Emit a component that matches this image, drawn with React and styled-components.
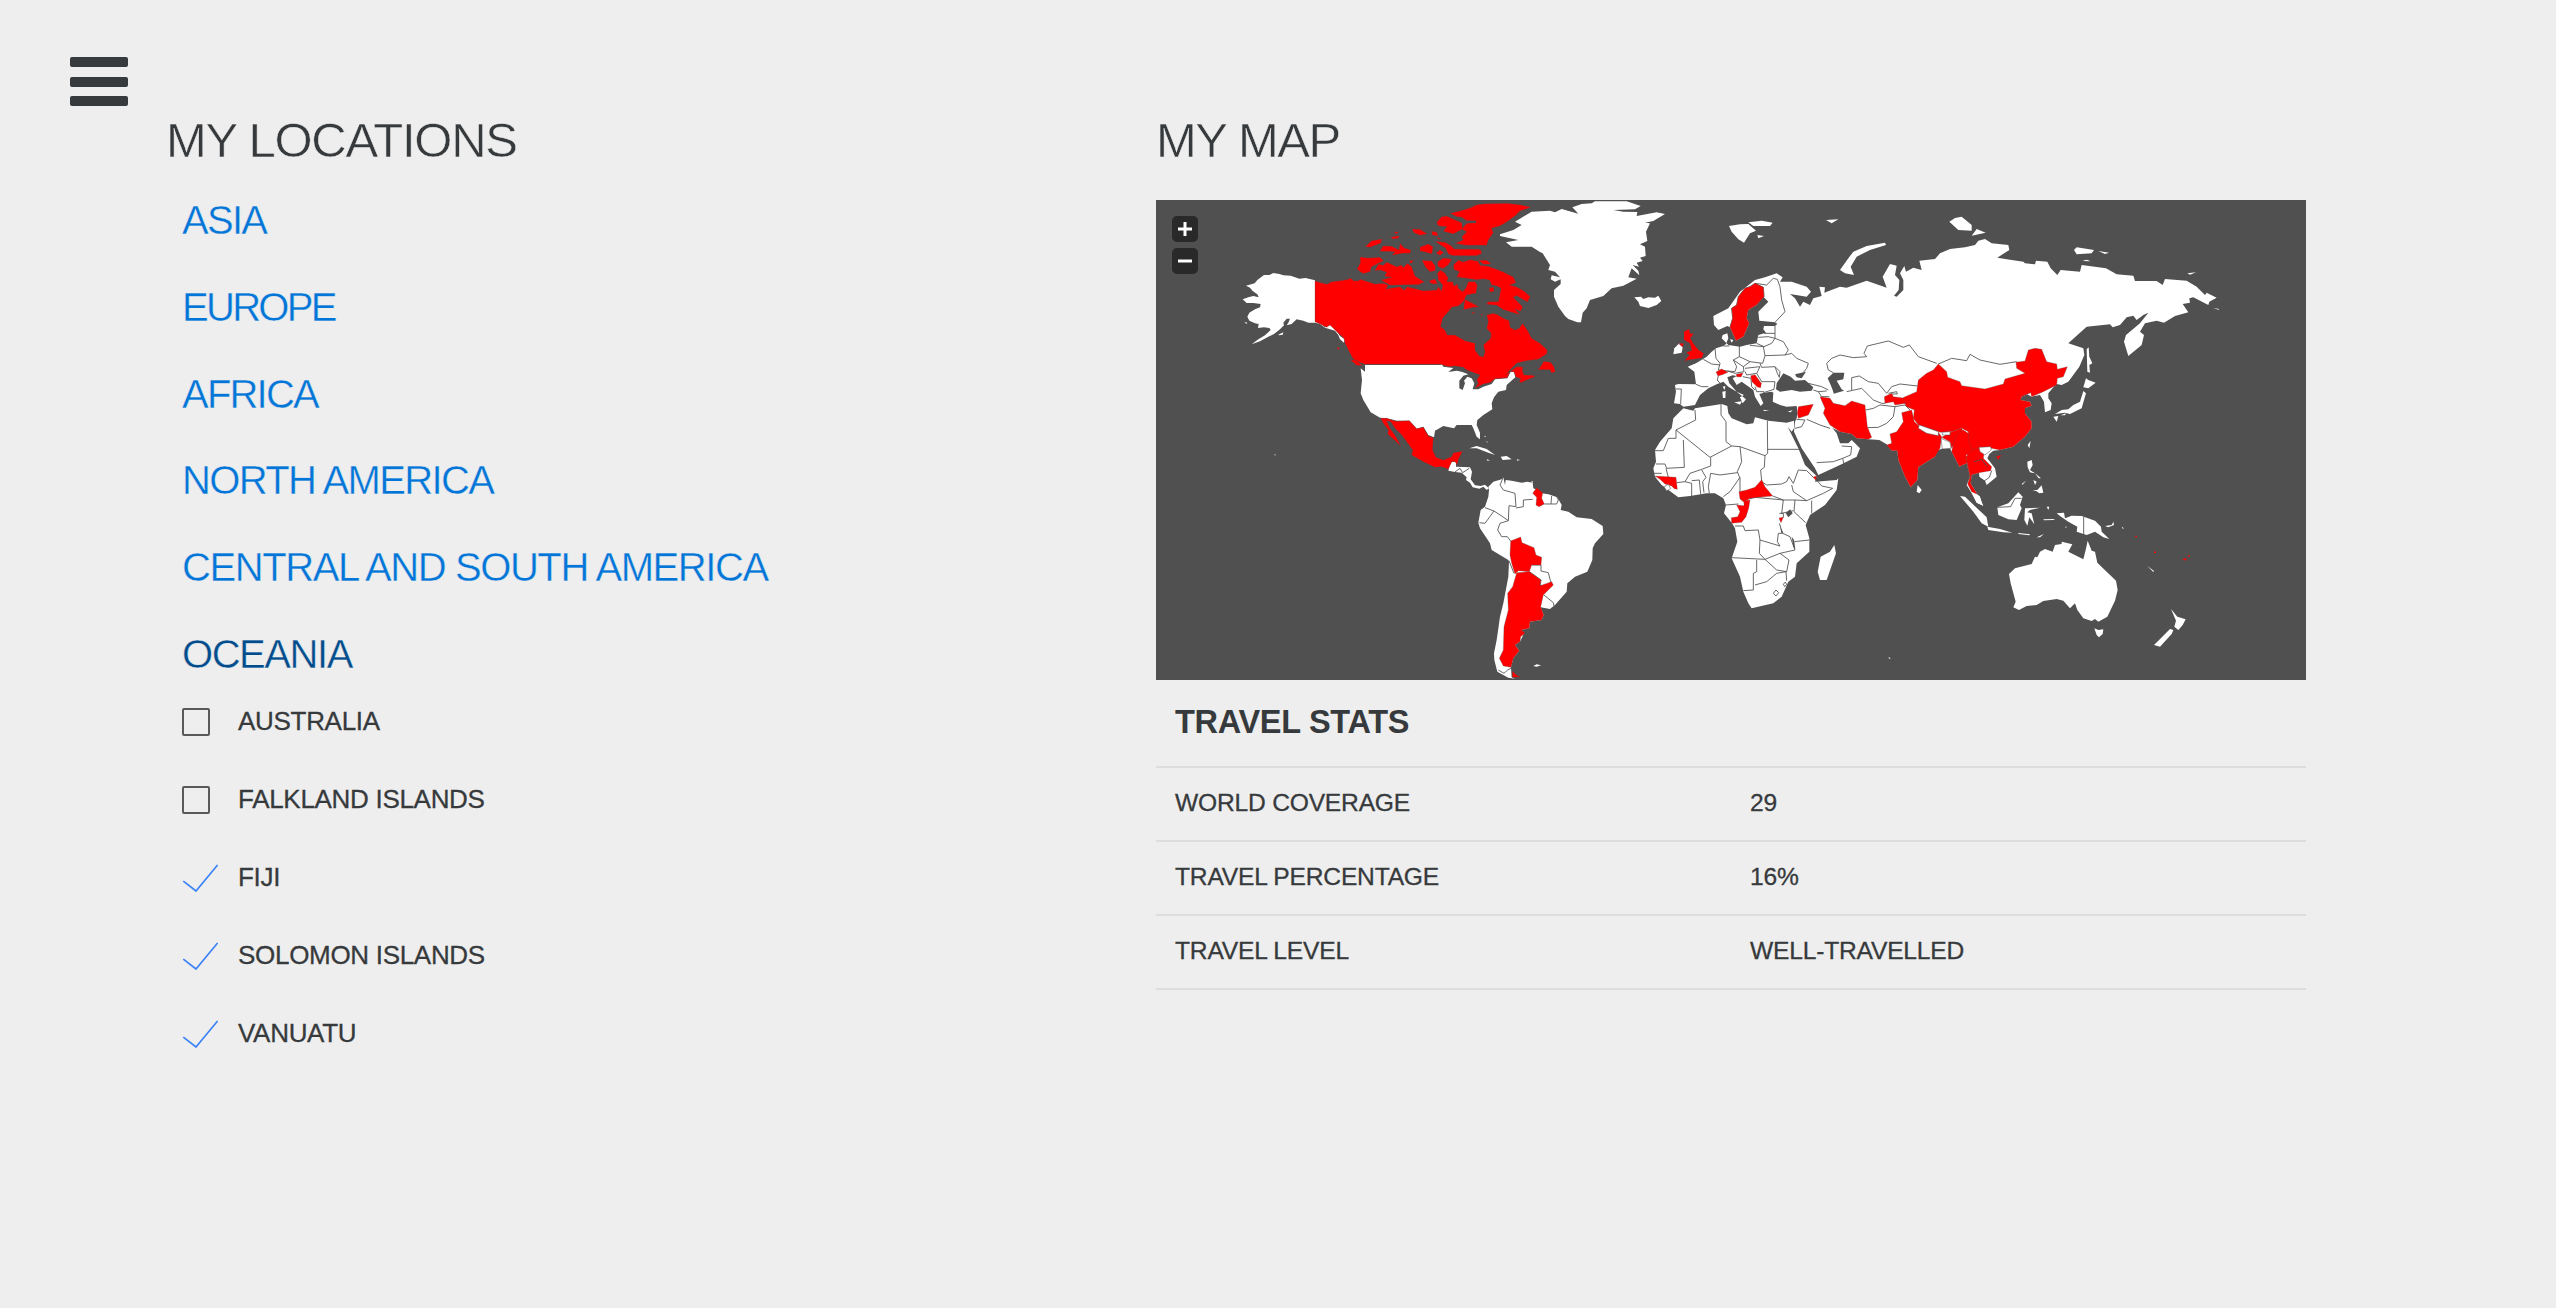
import React, { useState } from "react";
import styled, { createGlobalStyle } from "styled-components";

const GlobalStyle = createGlobalStyle`
  * { box-sizing: border-box; }
  body {
    margin: 0;
    background: #eeeeee;
    color: #373a3c;
    font-family: "Liberation Sans", Arial, sans-serif;
    font-size: 26px;
  }
`;

const Page = styled.div`
  display: grid;
  grid-template-columns: 1156px 1150px;
  height: 1308px;
  overflow: hidden;
  padding-top: 57px;
`;

const LocationsColumn = styled.section`
  padding-left: 70px;
`;

const MapColumn = styled.section`
  padding-top: 49px;
`;

const MenuButton = styled.button`
  display: flex;
  flex-direction: column;
  justify-content: space-between;
  width: 58px;
  height: 49px;
  padding: 0;
  border: 0;
  background: none;
`;

const MenuBar = styled.span`
  height: 10px;
  border-radius: 2px;
  background: #373a3c;
`;

const Title = styled.h1`
  margin: 0;
  height: ${(p) => p.$height}px;
  padding-left: ${(p) => p.$inset}px;
  font-size: 49px;
  font-weight: 300;
  line-height: 68px;
  letter-spacing: ${(p) => p.$tracking}px;
  white-space: nowrap;
  -webkit-text-stroke: 0.5px #eeeeee;
`;

const RegionList = styled.ul`
  margin: 0;
  padding: 0 0 0 112px;
  list-style: none;
`;

const RegionItem = styled.li`
  height: ${(p) => (p.$open ? 58.8 : 86.8)}px;
`;

const RegionLink = styled.a`
  display: block;
  font-size: 40px;
  line-height: 60px;
  letter-spacing: ${(p) => p.$tracking}px;
  white-space: nowrap;
  color: ${(p) => (p.$open ? "#014c8c" : "#0275d8")};
  -webkit-text-stroke: 0.4px #eeeeee;
`;

const CountryList = styled.ul`
  margin: 0;
  padding: 0 0 0 112px;
  list-style: none;
`;

const CountryRow = styled.li`
  display: flex;
  align-items: center;
  height: 78px;
  letter-spacing: -0.3px;
  -webkit-text-stroke: 0.3px #373a3c;
`;

const Mark = styled.span`
  display: flex;
  flex: none;
  width: 56px;
`;

const EmptyBox = styled.span`
  width: 28px;
  height: 28px;
  border: 2px solid #5a5a5a;
  border-radius: 2px;
`;

const MapFrame = styled.div`
  position: relative;
  height: 480px;
  background: #505050;
  overflow: hidden;
`;

const MapDrawing = styled.svg`
  display: block;
  width: 100%;
  height: 100%;
`;

const ZoomControls = styled.div`
  position: absolute;
  left: 16px;
  top: 16px;
  display: flex;
  flex-direction: column;
  gap: 6px;
`;

const ZoomButton = styled.button`
  display: flex;
  align-items: center;
  justify-content: center;
  width: 26px;
  height: 26px;
  padding: 0;
  border: 0;
  border-radius: 5px;
  background: #292929;
`;

const Stats = styled.table`
  width: 100%;
  border-collapse: separate;
  border-spacing: 0;
  table-layout: fixed;
`;

const StatsHead = styled.th`
  height: 88px;
  padding: 0 19px 1px;
  border-bottom: 2px solid #dddddd;
  text-align: left;
  font-size: 32.5px;
  letter-spacing: -0.3px;
`;

const StatCell = styled.td`
  height: 74px;
  padding: 0 19px 2px;
  border-bottom: 2px solid #dddddd;
  font-size: 24.6px;
  letter-spacing: -0.2px;
  -webkit-text-stroke: 0.3px #373a3c;
`;

/* Every sheet of the atlas is drawn in thirds of a pixel from its own origin. */
const SHEETS = [
  {
    at: [1140, 100],
    land: [
      "525,541 497,534 478,536 452,527 430,526 418,522 400,519 388,525 372,525 352,540 344,550 318,557 330,563 338,573 352,583 356,592 340,588 325,592 308,598 320,609 340,609 362,612 360,622 345,628 328,638 322,650 328,662 345,670 356,672 354,684 372,682 388,684 392,690 375,706 355,718 335,733 360,724 385,710 402,702 420,688 432,676 430,668 440,656 450,656 445,668 440,676 455,672 470,658 490,662 505,668 525,668 540,672 555,683 570,688 585,692 595,705 600,718 612,728 614,718 600,708 590,692 575,676 565,676 555,682 540,668 525,666",
      "415,704 430,697 428,704 417,706",
      "312,668 320,667 322,671",
      "403,1062 407,1064 405,1067",
    ],
  },
  {
    at: [1320, 190],
    land: [
      "135,525 362,525 365,522 370,530 400,534 385,546 410,542 425,545 445,553 430,557 418,572 418,595 428,600 435,580 432,572 442,560 455,565 463,580 458,598 475,598 490,590 515,582 525,568 562,565 572,545 582,545 586,562 560,585 558,600 535,605 522,622 515,640 517,658 490,675 472,690 470,705 480,728 480,748 470,740 460,715 455,705 435,705 410,705 402,715 370,708 345,722 342,742 325,735 310,710 290,716 268,692 230,692 200,685 180,683 152,667 130,630 122,610 126,570 122,535 135,545",
      "493,737 498,739 495,742",
      "500,752 504,758 500,756",
    ],
    visited: [
      "-15,273 20,283 35,275 60,272 85,268 92,264 100,272 115,272 122,268 130,271 165,282 190,280 205,286 198,297 240,290 252,301 262,290 310,302 350,300 355,290 365,303 368,285 355,270 352,250 362,240 375,250 385,265 380,275 398,275 402,288 412,282 415,295 428,305 437,295 445,275 465,275 472,285 468,310 440,315 430,335 415,348 395,352 385,365 368,385 362,410 375,420 382,435 405,435 435,452 465,460 465,480 478,498 490,500 495,485 490,465 512,445 513,430 500,415 505,395 500,375 520,370 535,375 550,385 568,392 570,412 585,420 598,415 608,400 625,425 635,445 660,460 682,480 680,492 655,508 620,512 590,520 570,540 560,552 590,530 608,530 608,545 612,555 640,556 645,560 620,570 602,578 598,575 602,565 588,562 582,545 570,545 562,563 525,566 510,578 490,582 465,595 475,580 470,570 480,555 440,540 430,532 405,528 385,530 362,523 135,523 125,520 100,508 90,490 75,460 72,445 55,430 30,405 20,412 0,402 -15,395",
      "390,70 430,60 455,52 470,44 495,41 560,40 600,44 633,52 600,63 590,74 560,96 540,108 515,115 520,128 505,150 500,166 440,166 405,160 430,150 425,140 440,125 425,118 440,100 468,98 468,92 440,92 425,82 410,80",
      "350,97 365,80 380,78 400,87 425,98 428,117 400,132 370,124 380,110 355,108",
      "276,117 300,118 322,132 300,136 282,128",
      "334,124 350,126 354,138 338,136",
      "220,126 236,125 230,132",
      "212,141 238,137 235,145 218,147",
      "136,170 155,152 186,147 182,160 150,172",
      "179,184 190,167 215,169 237,180 240,160 252,173 273,180 270,190 250,190 215,196 225,185",
      "300,171 325,162 339,170 336,192 318,187 300,183",
      "348,190 360,179 371,188 360,196",
      "345,154 375,157 395,168 402,177 480,178 486,190 470,197 400,197 385,192 376,174 365,167",
      "350,143 368,145 355,148",
      "120,201 145,204 180,202 191,212 155,230 150,245 130,251 111,238 121,218",
      "164,242 175,222 190,226 200,216 230,230 245,225 250,233 262,220 275,230 285,258 313,276 295,284 270,284 210,286 183,270 215,262 193,259 200,247 180,240",
      "306,211 335,213 346,228 346,242 330,245 316,231",
      "353,215 370,204 395,207 385,225 368,236 353,229",
      "327,272 345,267 353,282 335,281",
      "268,212 282,211 272,221",
      "401,224 415,210 430,216 450,209 475,214 480,226 505,229 530,238 550,246 580,261 588,278 570,285 590,291 612,303 631,320 622,336 590,317 580,322 608,350 602,364 585,357 600,374 550,359 530,346 499,343 505,335 535,335 540,310 543,295 530,288 515,285 508,270 490,267 470,269 410,261 418,245 401,238",
      "476,211 500,211 514,222 490,223",
      "507,294 521,291 522,304 510,307",
      "434,328 455,338 477,351 460,352 431,359",
      "455,367 465,366 460,371",
      "482,373 490,373 486,377",
      "680,498 672,514 692,517 702,530 706,545 695,549 690,539 654,539 665,525",
      "91,509 110,511 127,527 110,526",
      "51,471 59,474 55,481",
      "182,685 200,685 228,694 268,692 290,716 310,712 325,738 340,743 338,780 348,802 370,810 395,800 400,788 428,784 415,808 412,825 405,815 395,815 385,838 365,830 345,832 310,815 275,795 278,780 245,735 225,715 212,695 200,692 210,715 228,740 243,769 220,747 203,732 205,720 190,700",
    ],
  },
  {
    at: [1540, 190],
    land: [
      "-120,133 -80,120 -55,105 -75,95 -25,65 30,62 45,67 65,57 115,71 97,52 125,42 155,40 165,34 260,34 302,48 285,58 220,60 250,65 292,66 290,78 350,67 375,72 340,93 315,98 330,100 318,125 322,153 300,163 315,170 317,198 300,203 308,213 290,218 297,230 278,225 295,242 298,256 275,235 265,262 290,266 250,287 215,295 190,318 150,330 140,355 128,368 123,397 112,397 85,387 75,378 55,350 42,320 42,300 62,282 62,268 45,275 32,268 35,256 60,262 45,245 25,240 30,225 8,190 0,186 -25,170 -85,170 -102,157 -65,150 -120,138",
      "283,322 303,320 310,327 325,322 345,323 355,317 364,333 350,345 325,354 300,348 295,335",
    ],
  },
  {
    at: [1440, 440],
    land: [
      "25,92 28,78 35,65 48,65 48,80 90,82 96,95 92,118 105,136 122,138 135,134 147,145 140,150 130,140 118,146 98,142 90,128 78,120 80,112 65,98 45,96",
      "147,150 145,140 160,125 185,118 190,112 195,135 197,120 215,122 245,128 262,125 278,128 280,145 292,150 305,160 325,163 352,172 365,195 362,210 385,215 410,232 455,237 488,258 490,282 465,310 458,325 457,360 442,395 405,410 382,430 380,455 345,495 330,507 302,502 311,525 305,540 270,545 268,565 245,570 252,580 240,605 225,615 238,632 220,655 213,682 215,712 225,716 205,713 172,695 163,660 162,640 170,600 173,580 180,530 190,490 205,410 207,365 205,360 155,330 150,310 120,265 115,248 122,210 135,200 145,170",
      "88,25 110,18 140,27 165,45 145,38 110,25",
      "182,50 200,48 215,58 188,60",
      "140,58 150,61 142,62",
      "230,58 240,60 232,62",
      "280,678 290,673 303,676 290,680",
      "274,124 279,124 277,130",
    ],
    visited: [
      "278,160 290,143 308,158 305,175 313,192 297,200 288,195 290,172",
      "212,303 242,291 246,308 282,323 288,345 305,352 303,375 275,375 268,395 235,392 225,402 215,370 210,345",
      "230,398 268,395 303,420 300,437 335,425 340,435 310,465 302,500 311,525 305,540 270,545 268,565 245,570 255,580 242,590 240,605 225,615 238,632 220,655 213,682 190,678 178,655 190,630 192,560 205,510 203,460 218,440",
      "217,693 230,706 243,711 217,712",
    ],
    borders: [
      "190,112 180,135 190,150 225,160 228,200 207,197 205,242",
      "228,204 250,200 250,180 278,178",
      "205,242 180,250 173,270 185,290 202,290 212,303",
      "118,248 135,250 162,213 135,203",
      "162,213 185,228 205,242",
      "335,168 333,192 350,192 355,180 350,170",
      "313,192 333,192",
      "303,375 303,393 325,398 332,425 325,437 300,437",
      "275,375 303,375",
      "268,395 303,420 300,437",
      "312,465 340,488 342,498",
      "207,362 212,375 222,400",
      "175,690 192,700 203,690 213,685",
      "45,96 60,85 68,98 88,85",
    ],
  },
  {
    at: [1640, 190],
    land: [
      "220,378 265,355 300,305 345,270 375,262 410,250 428,262 420,275 455,275 500,290 513,305 500,320 450,312 465,325 480,350 490,335 510,345 520,325 545,318 538,290 555,292 553,308 600,290 620,293 680,272 740,293 728,260 750,222 770,227 765,255 778,270 776,300 762,317 770,320 790,300 790,270 780,250 793,228 798,245 820,233 845,240 838,212 885,207 900,190 930,177 975,172 1005,165 1015,152 1035,147 1055,160 1105,165 1108,180 1072,203 1115,210 1150,215 1155,220 1185,223 1188,212 1222,215 1232,235 1252,255 1262,240 1320,245 1325,225 1398,235 1430,253 1480,257 1485,273 1550,273 1568,285 1575,267 1640,272 1670,290 1695,315 1700,308 1730,323 1708,335 1705,345 1660,322 1648,325 1650,338 1628,342 1645,367 1605,378 1572,398 1550,392 1515,400 1500,425 1512,435 1505,465 1465,498 1452,455 1458,435 1500,400 1525,368 1510,375 1490,390 1480,377 1460,382 1440,405 1418,412 1410,403 1340,410 1285,460 1330,475 1333,495 1318,530 1285,575 1265,585 1250,582 1240,592 1225,610 1225,625 1235,640 1232,660 1215,667 1212,635 1200,615 1175,620 1140,600 1000,640 1000,745 700,690 700,500 405,397 358,392 355,365 385,335 370,320 350,345 325,360 320,385 328,400 310,440 288,452 270,412 262,408 235,420 222,405",
      "405,397 412,402 405,408 372,408 370,418 378,428 355,435 350,460 320,465 300,470 265,465 245,445 248,435 262,430 265,445 258,462 250,468 228,475 215,485 200,500 168,520 143,530 163,545 168,583 115,582 105,585 108,605 102,640 120,642 130,650 165,645 180,615 205,595 230,583 250,575 265,590 290,605 318,628 308,640 300,622 312,615 290,605 268,580 262,562 278,556 290,558 278,565 290,585 305,575 340,600 345,620 362,648 370,640 358,612 372,608 395,605 400,608 398,635 420,645 440,650 470,648 475,690 700,690 750,400",
      "103,475 118,460 128,472 125,488 100,493",
      "267,108 300,103 325,102 348,122 330,130 312,158 295,148 275,125",
      "325,97 365,92 398,98 390,108 340,108",
      "352,135 372,138 355,145",
      "558,90 595,88 575,100",
      "600,240 625,205 640,185 680,168 735,158 738,165 690,180 650,200 632,230 642,255 615,250",
      "928,95 945,84 965,80 995,105 995,122 955,120",
      "1010,117 1037,128 995,137",
      "1302,180 1310,172 1362,180 1355,190 1310,193",
      "1375,183 1407,188 1395,192",
      "1327,213 1340,209 1352,214",
      "1642,250 1668,247 1650,254",
      "1720,354 1738,357 1735,359",
      "1340,478 1346,472 1348,500 1357,520 1348,525 1350,548 1342,545",
      "1338,565 1345,570 1367,578 1345,595 1330,592",
      "1330,603 1338,610 1325,655 1290,672 1275,668 1245,672 1265,660 1285,658 1300,645 1320,635",
      "1240,680 1255,678 1250,695",
      "1262,676 1278,670 1275,676",
      "248,590 256,588 254,600",
      "247,605 257,603 256,624 249,624",
      "283,637 306,634 300,644",
      "370,659 388,662 372,663",
      "443,665 458,660 452,667",
      "270,448 280,450 275,458",
    ],
    water: [
      "563,565 580,548 613,548 610,568 590,572 605,598 622,608 618,645 590,640 578,600 572,585",
      "408,598 410,580 430,550 452,560 465,572 495,570 520,592 515,602 480,605 455,600 420,605",
      "465,553 498,545 485,565 470,562",
      "368,612 395,606 398,640 390,655 375,640",
    ],
    visited: [
      "345,280 370,292 372,320 350,345 325,360 320,385 328,400 310,440 288,452 270,412 278,385 275,355 290,345 295,320 315,295 330,290",
      "132,424 148,417 150,430 161,431 151,445 161,462 176,480 191,490 186,504 150,509 133,513 148,495 139,487 155,482 150,460 132,450",
      "116,461 131,459 128,471",
      "228,546 245,537 264,547 250,553 234,558",
      "289,553 309,549 303,561 290,560",
      "332,557 345,554 364,580 362,593 352,591 336,575",
    ],
    borders: [
      "345,280 380,285 400,265 412,268 420,290 425,330 435,365 405,397",
      "270,412 278,385 275,355 290,345 295,320 315,295 330,290 345,280 370,292 372,320",
      "405,408 405,445 385,440 355,442",
      "372,430 405,430",
      "350,460 372,470 395,460 405,445 430,455 445,480 435,495 375,497 370,470 330,466",
      "298,468 298,500 330,515 368,520 375,497",
      "250,468 268,468",
      "225,475 228,505 240,520 235,540 262,543 285,545 290,530 280,510 298,500",
      "280,510 310,530 330,515",
      "360,520 365,532 405,530 420,545 418,562",
      "405,530 412,550 418,562",
      "435,495 455,490 470,505 505,520 500,535 490,547",
      "315,535 360,530 350,550 320,555 315,545",
      "350,550 365,575 405,575 402,598 370,608",
      "345,590 350,605 372,605",
      "308,560 333,565 335,590 345,600",
      "262,543 285,550 312,545 310,530",
      "168,583 185,590 205,590",
      "235,557 232,570 240,580",
      "190,508 215,522 240,525",
      "108,597 124,597 122,642",
      "580,548 565,540 560,520 575,505 600,495 640,503 680,500 672,490 682,468 745,453 790,472 808,465 835,500 890,520",
      "505,580 545,590 565,600",
      "520,600 535,605 545,620 568,620",
      "535,605 560,603",
    ],
  },
  {
    at: [1780, 230],
    land: [
      "200,480 500,400 800,480 755,500 752,488 725,500 722,510 750,515 755,527 735,535 735,550 755,575 755,595 735,620 700,650 660,660 640,662 628,672 622,685 645,715 650,740 620,765 615,752 598,740 597,728 575,735 572,760 592,793 600,800 607,825 590,818 575,790 560,765 570,740 560,700 538,710 515,665 510,655 490,655 470,662 465,680 415,712 412,750 392,772 375,740 355,690 352,662 335,662 320,643 298,630 265,628 230,625 215,612 180,605 150,590 130,550 130,500",
      "413,765 425,780 418,790 410,785",
    ],
    visited: [
      "475,402 500,425 503,442 540,455 545,467 615,477 670,462 675,447 735,430 710,415 708,397 735,393 745,360 765,355 785,358 800,395 830,402 832,418 862,410 850,440 832,445 830,465 790,485 755,500 752,488 725,500 722,510 750,515 755,527 735,535 735,550 755,575 755,595 735,620 700,650 660,660 620,652 600,665 575,660 560,640 565,605 545,595 515,605 480,607 415,585 400,565 403,540 380,530 365,505 410,485 415,450 440,430 460,420",
      "365,548 395,540 403,575 420,590 475,607 485,620 480,655 465,680 415,712 412,750 392,772 375,740 355,690 352,662 335,662 320,645 335,640 330,612 350,605 370,575",
      "485,622 515,605 545,595 550,605 530,625 515,655 510,635",
      "550,600 565,610 568,640 578,660 570,672 558,675 570,740 560,700 538,710 515,665 520,640 530,615",
      "558,680 575,660 597,655 612,672 610,685 635,710 632,722 597,728 575,735 572,760 592,793 575,785 563,762 570,740",
      "648,680 664,674 655,689",
      "120,500 150,505 160,520 195,527 215,513 255,525 262,590 275,622 265,628 230,625 215,612 180,605 150,585 130,550 135,535",
      "55,530 100,523 85,555 55,565 52,550",
      "313,500 335,490 340,500 365,503 378,520 345,525 340,515 315,520",
    ],
    overlay: [
      "418,585 475,605 475,617 440,610 415,595",
      "487,607 510,605 510,615 487,615",
      "483,625 510,637 513,655 487,657",
      "597,652 632,650 634,660 615,675 600,665",
    ],
    borders: [
      "215,480 215,443 238,438 265,455 295,460 320,490 335,470 360,462 412,468",
      "200,485 245,475 280,510 305,520 315,520",
      "325,490 350,485 352,492 335,492",
      "258,540 280,535 300,525 345,530 340,560 320,580 295,592 262,593",
      "345,530 375,525 390,540",
      "475,402 515,385 560,392 570,373 600,390 660,403 710,395",
      "610,755 628,742 635,722",
    ],
    seams: ["582,695 605,688 622,710"],
  },
  {
    at: [1640, 390],
    land: [
      "130,55 160,62 165,55 245,42 262,48 265,70 275,85 320,103 340,100 345,82 385,92 440,98 462,92 462,115 455,125 443,110 475,175 495,225 530,258 525,275 590,270 595,265 590,300 555,345 510,375 497,405 508,445 508,485 470,520 465,560 445,575 425,620 400,640 335,655 325,640 310,605 300,560 275,505 292,455 285,415 275,398 252,370 258,345 250,325 225,310 200,310 150,318 115,322 65,285 45,260 40,235 48,215 45,180 60,155 95,115 100,85",
      "470,85 475,50 500,48 545,48 570,105 590,130 600,160 625,160 635,150 660,175 650,200 600,225 535,255 525,235 485,175 462,125 465,95",
      "583,465 588,490 560,570 540,570 533,545 542,500 570,485",
    ],
    water: [
      "437,370 450,358 458,370 445,382",
      "455,440 462,450 466,478 460,470",
      "418,400 422,415 430,430 424,428",
    ],
    visited: [
      "45,258 108,262 112,298 103,296 95,288 75,282 60,268",
      "297,305 320,300 345,292 365,269 375,290 398,318 355,322 330,325 312,337 300,327",
      "312,332 330,330 326,355 318,380 305,397 275,400 274,383 293,380 300,365 290,345 312,347",
      "417,384 430,382 423,398",
      "519,262 530,257 528,271",
    ],
    overlay: ["72,290 85,283 92,296 80,302"],
    borders: [
      "165,60 167,90 108,120 108,145 85,145 70,182 45,182",
      "108,120 210,202 275,168 258,155 258,95 243,75 243,42",
      "130,150 133,232 80,235 75,222 48,222",
      "78,235 85,262",
      "42,250 65,250",
      "275,168 300,170 375,197 383,190 382,92",
      "383,178 480,178",
      "300,170 305,215 292,245 300,265 300,285",
      "375,197 373,232 362,240 365,275",
      "212,202 212,228 185,238 150,250 135,275",
      "212,250 205,290 208,310",
      "212,250 240,255 292,248",
      "110,278 135,275 155,280 155,318",
      "155,272 178,270 182,312",
      "185,240 198,262 188,275 192,308",
      "300,262 270,305 250,320",
      "258,345 295,342",
      "300,285 300,305",
      "365,275 380,285 425,282 440,275 447,260 460,280 475,240 500,242 520,262",
      "398,318 430,330 465,330 500,332 550,310 578,295 545,288 530,270",
      "455,285 460,305 500,332",
      "465,330 462,365 497,398",
      "515,332 515,370",
      "430,330 425,370 460,362",
      "328,327 345,322 430,330",
      "418,370 430,370 430,383",
      "418,400 428,430 415,430 412,455 420,468 360,450 355,420 315,422 310,408 285,408",
      "360,450 358,490 375,508 275,503",
      "375,508 420,490 465,480 450,440 428,430",
      "350,510 350,545 340,550 340,600 310,602",
      "375,508 410,540 440,545 447,510 420,490",
      "345,585 380,575 410,550 438,545 440,572",
      "463,455 508,450",
      "400,610 408,600 416,608 408,618 400,610",
      "430,583 436,576 440,583 434,590 430,583",
      "500,88 540,105 570,115",
      "530,218 580,215 608,205 632,195 635,170 605,168",
      "608,205 612,222",
      "470,88 495,90 485,110 465,115",
    ],
  },
  {
    at: [1940, 430],
    land: [
      "207,432 225,415 275,402 285,380 292,382 300,365 315,357 338,365 345,345 365,342 365,335 397,343 385,365 430,388 437,360 443,332 455,362 465,365 472,398 500,425 528,452 533,480 525,512 502,560 475,575 465,567 455,573 430,565 412,540 405,520 390,535 370,512 350,507 310,513 290,525 260,528 237,540 220,532 227,515 212,460",
      "463,595 475,600 490,598 488,612 477,622 470,615",
      "693,537 712,560 737,568 728,585 715,600 703,590 708,572",
      "690,597 700,600 695,612 660,650 642,645 655,632",
      "350,250 372,248 375,265 395,257 425,258 465,272 483,290 485,305 508,327 490,322 465,305 440,315 410,305 412,290 385,275 360,258",
      "495,288 515,285 520,275 522,285 505,292",
      "545,290 552,295 548,296",
      "60,198 75,200 140,262 145,290 125,280 100,245",
      "142,290 180,297 217,308 190,307 145,300",
      "235,309 270,313 268,316 235,312",
      "290,322 312,312 300,322",
      "98,192 118,198 130,228 110,218",
      "172,232 205,220 235,187 248,200 240,225 245,235 230,270 205,268 175,255",
      "255,235 300,233 270,240 262,247 275,250 283,283 268,262 262,287 253,270",
      "262,95 275,90 278,105 270,120 285,130 270,127 263,112",
      "278,180 292,180 305,166 310,188 298,190 290,184",
      "285,130 303,145 296,145",
      "280,150 290,155 285,165",
      "320,230 328,230 325,240",
      "310,268 345,267 340,270 312,271",
      "263,45 272,33 268,55",
      "245,162 258,152 248,164",
      "375,290 380,290 378,294",
      "622,408 642,423 640,426",
      "-155,682 -148,684 -152,687",
    ],
    marks: [
      "586,318 591,318 591,322 586,322",
      "642,365 648,365 648,369 642,369",
      "729,386 739,385 739,391 731,391",
      "741,379 750,375 749,380",
    ],
    borders: ["431,260 431,314", "172,232 212,230 225,205 245,205"],
  },
];

const placement = (sheet) => ({
  transform: `translate(${sheet.at[0]} ${sheet.at[1]}) scale(0.33333)`,
  strokeLinejoin: "round",
});

const shapes = (list = [], attrs) =>
  list.map((points, i) => <polygon key={i} points={points} {...attrs} />);

const lines = (list = []) =>
  list.map((points, i) => (
    <polyline key={i} points={points} fill="none" stroke="#505050" strokeWidth="2.6" />
  ));

function PhysicalLayer({ sheet }) {
  return (
    <g {...placement(sheet)}>
      {shapes(sheet.land, { fill: "#ffffff" })}
      {shapes(sheet.water, { fill: "#505050" })}
    </g>
  );
}

function PoliticalLayer({ sheet }) {
  return (
    <g {...placement(sheet)}>
      {lines(sheet.borders)}
      {shapes(sheet.visited, { fill: "#ff0000", stroke: "#505050", strokeWidth: 0.9 })}
      {lines(sheet.seams)}
      {shapes(sheet.overlay, { fill: "#ffffff", stroke: "#505050", strokeWidth: 1.6 })}
      {shapes(sheet.marks, { fill: "#ff0000" })}
    </g>
  );
}

function WorldMap() {
  return (
    <MapFrame>
      <MapDrawing viewBox="1156 200 1150 480">
        {SHEETS.map((s, i) => (
          <PhysicalLayer key={i} sheet={s} />
        ))}
        {SHEETS.map((s, i) => (
          <PoliticalLayer key={i} sheet={s} />
        ))}
      </MapDrawing>
      <ZoomControls>
        <ZoomButton aria-label="Zoom in">
          <svg width="14" height="14" viewBox="0 0 14 14" stroke="#fff" strokeWidth="3">
            <path d="M0 7H14M7 0V14" />
          </svg>
        </ZoomButton>
        <ZoomButton aria-label="Zoom out">
          <svg width="14" height="14" viewBox="0 0 14 14" stroke="#fff" strokeWidth="3">
            <path d="M0 7H14" />
          </svg>
        </ZoomButton>
      </ZoomControls>
    </MapFrame>
  );
}

const Tick = () => (
  <svg width="36" height="28" viewBox="0 0 36 28" fill="none" stroke="#3b82f6" strokeWidth="1.7">
    <path d="M1.3 17.2L14 27L35.6 1" />
  </svg>
);

const REGIONS = [
  { name: "ASIA", tracking: -1.7 },
  { name: "EUROPE", tracking: -2.7 },
  { name: "AFRICA", tracking: -1.8 },
  { name: "NORTH AMERICA", tracking: -1.65 },
  { name: "CENTRAL AND SOUTH AMERICA", tracking: -1.4 },
  { name: "OCEANIA", tracking: -1.45 },
];

const COUNTRIES = [
  ["AUSTRALIA", false],
  ["FALKLAND ISLANDS", false],
  ["FIJI", true],
  ["SOLOMON ISLANDS", true],
  ["VANUATU", true],
];

const STATS = [
  ["WORLD COVERAGE", "29"],
  ["TRAVEL PERCENTAGE", "16%"],
  ["TRAVEL LEVEL", "WELL-TRAVELLED"],
];

export default function App() {
  const [open] = useState("OCEANIA");
  return (
    <>
      <GlobalStyle />
      <Page>
        <LocationsColumn>
          <MenuButton aria-label="Menu">
            <MenuBar />
            <MenuBar />
            <MenuBar />
          </MenuButton>
          <Title $inset={96} $height={84} $tracking={-1.25}>
            MY LOCATIONS
          </Title>
          <RegionList>
            {REGIONS.map((r) => (
              <RegionItem key={r.name} $open={r.name === open}>
                <RegionLink $open={r.name === open} $tracking={r.tracking}>
                  {r.name}
                </RegionLink>
              </RegionItem>
            ))}
          </RegionList>
          <CountryList>
            {COUNTRIES.map(([name, visited]) => (
              <CountryRow key={name}>
                <Mark>{visited ? <Tick /> : <EmptyBox />}</Mark>
                {name}
              </CountryRow>
            ))}
          </CountryList>
        </LocationsColumn>
        <MapColumn>
          <Title $inset={0} $height={94} $tracking={-1.45}>
            MY MAP
          </Title>
          <WorldMap />
          <Stats>
            <thead>
              <tr>
                <StatsHead colSpan={2}>TRAVEL STATS</StatsHead>
              </tr>
            </thead>
            <tbody>
              {STATS.map(([label, value]) => (
                <tr key={label}>
                  <StatCell>{label}</StatCell>
                  <StatCell>{value}</StatCell>
                </tr>
              ))}
            </tbody>
          </Stats>
        </MapColumn>
      </Page>
    </>
  );
}
